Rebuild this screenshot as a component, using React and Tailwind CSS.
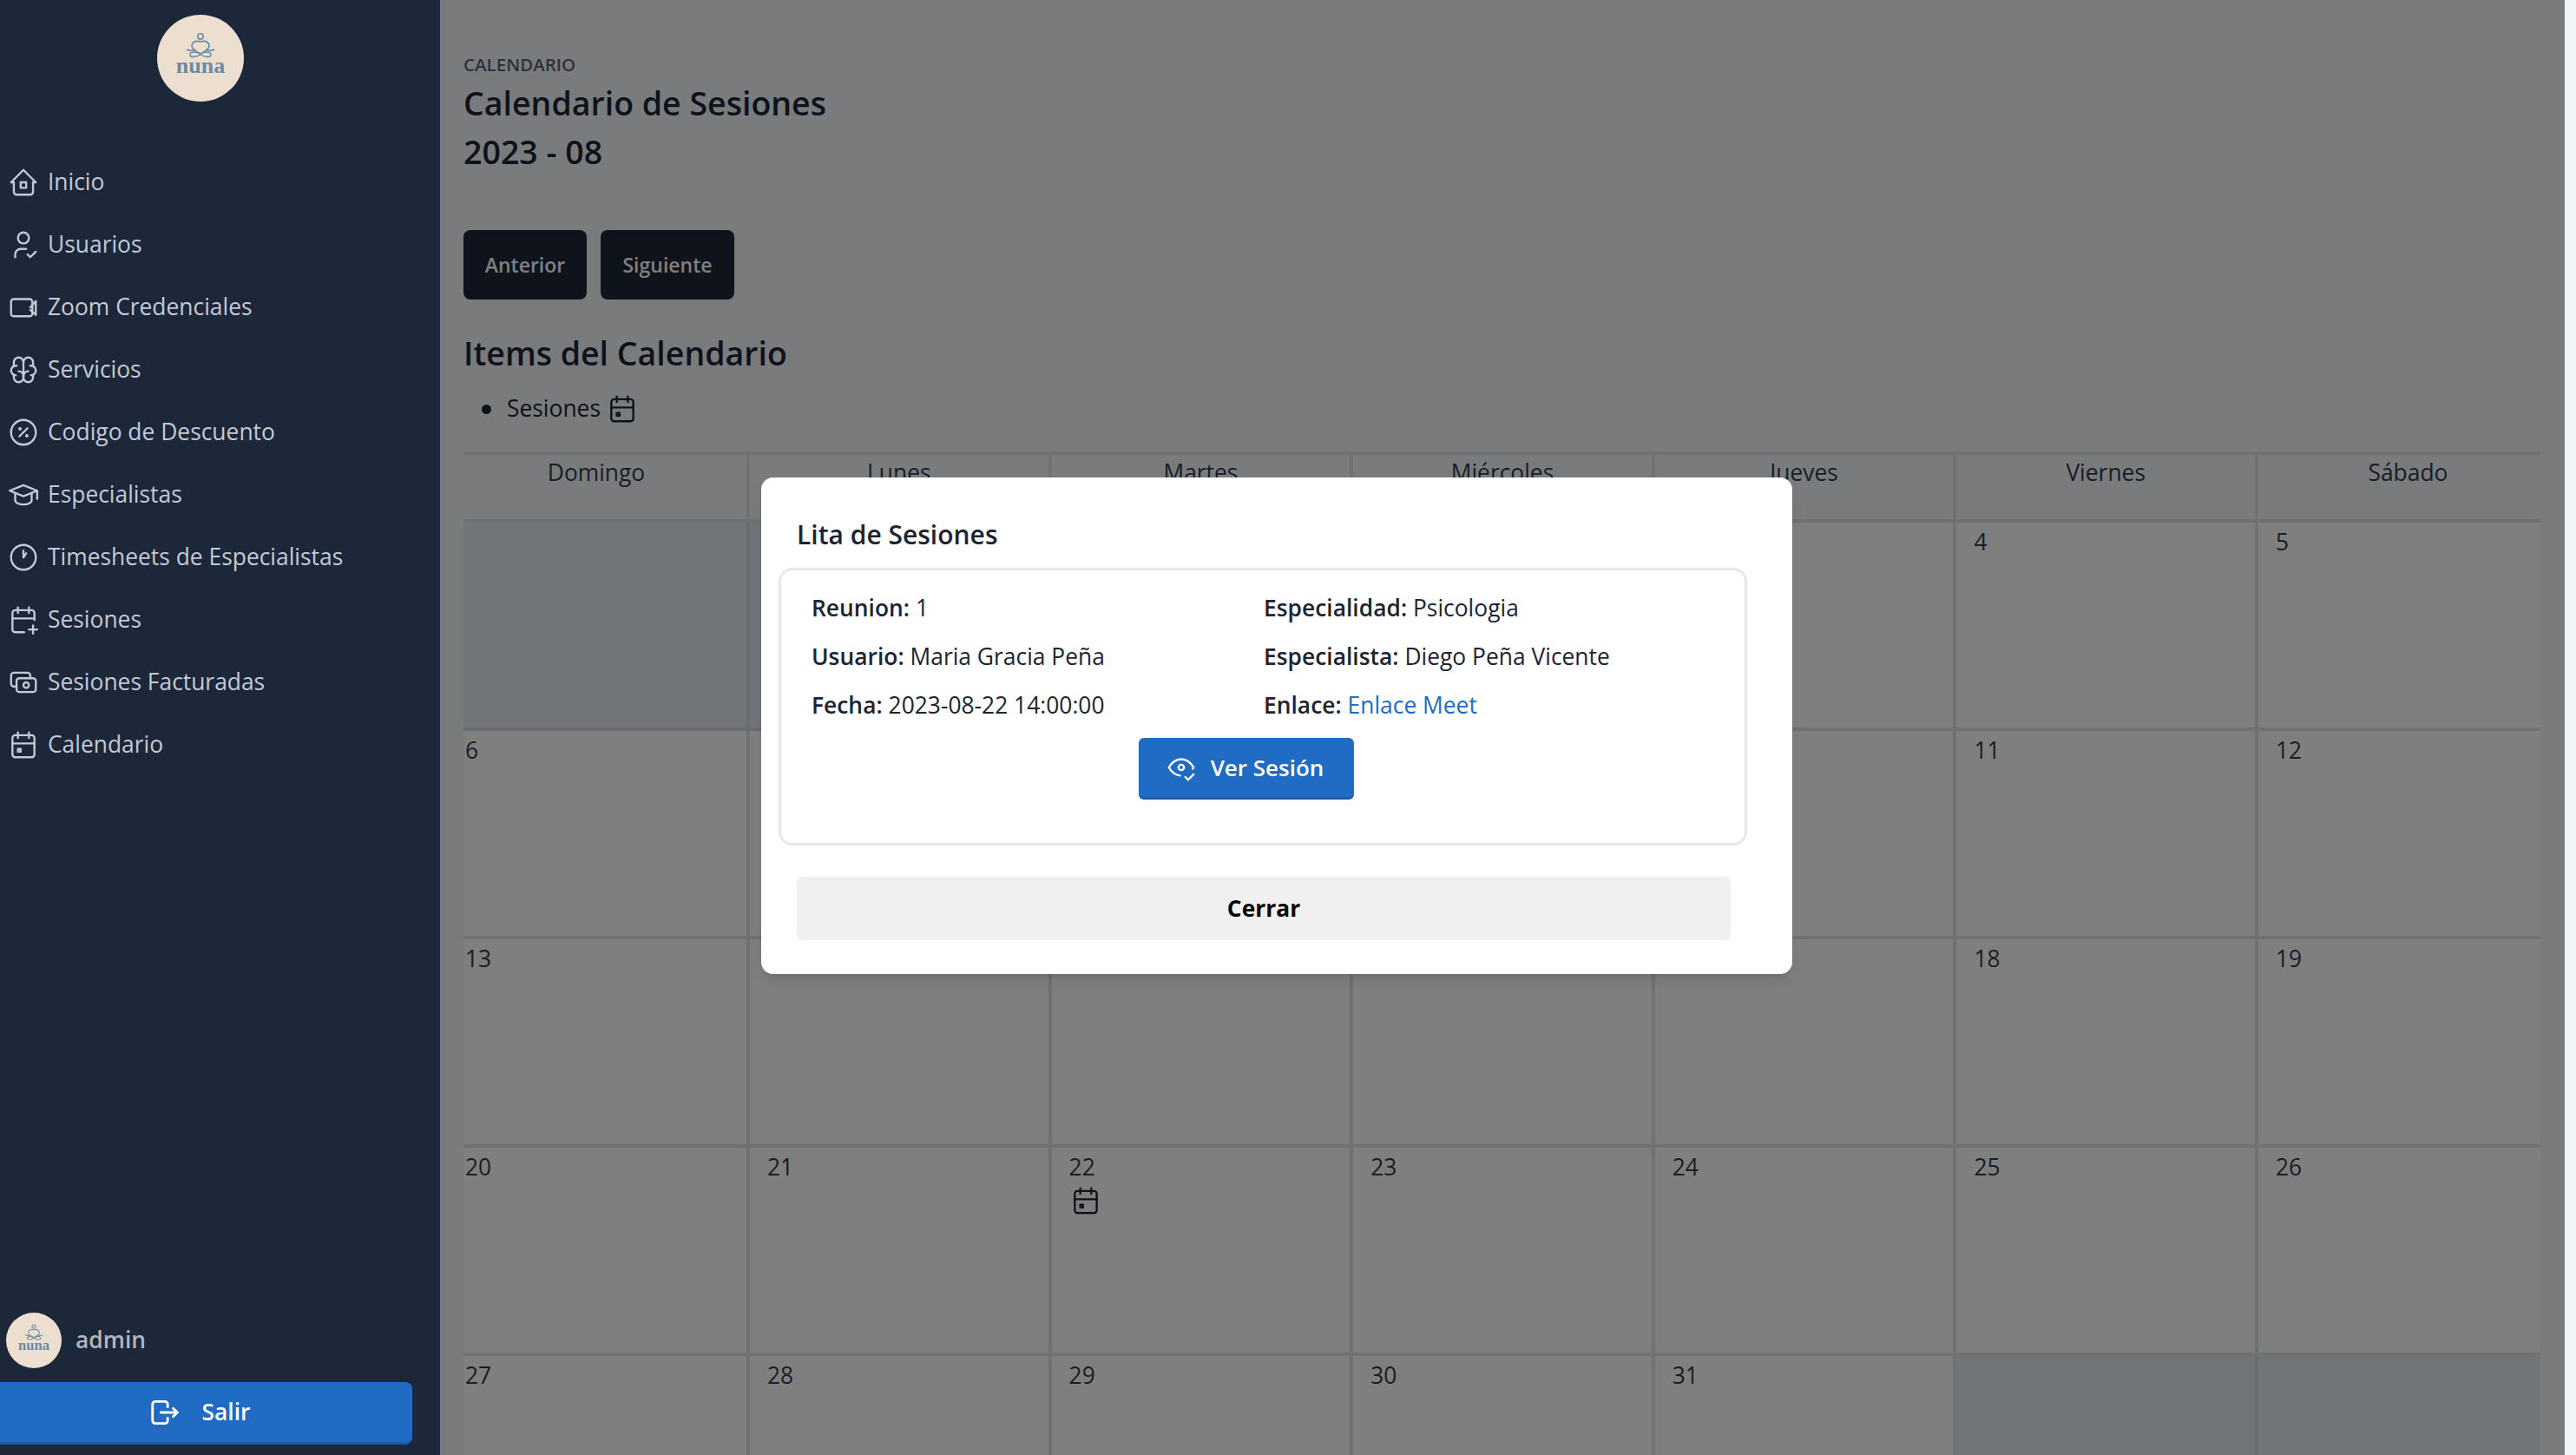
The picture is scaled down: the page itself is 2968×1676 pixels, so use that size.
import {
  TbHome2,
  TbUserCheck,
  TbBrain,
  TbDiscount,
  TbSchool,
  TbClockHour1,
  TbCalendarPlus,
  TbCash,
  TbCalendarEvent,
  TbLogout,
  TbEyeCheck,
} from "react-icons/tb";

const font = { fontFamily: '"Open Sans", "Noto Sans", sans-serif' };

function Logo({ size }) {
  return (
    <svg viewBox="0 0 100 100" className={size}>
      <circle cx="50" cy="50" r="50" fill="#ecdfd0" />
      <g fill="none" stroke="#6b8ba4" strokeWidth="1.6">
        <circle cx="50" cy="25" r="3.2" />
        <path d="M50 31C44 29 40 32 40 36C40 40 46 43 50 45C54 43 60 40 60 36C60 32 56 29 50 31Z" />
        <path d="M34 40C38 42 42 41 44 40M66 40C62 42 58 41 56 40" />
        <path d="M50 45.500C46 42 38 42 38 46C38 50 46 49 50 45.500C54 42 62 42 62 46C62 50 54 49 50 45.500Z" />
      </g>
      <text x="50" y="67" textAnchor="middle" fontSize="26" fontWeight="700" fill="#6b8ba4" fontFamily="Liberation Serif, serif">nuna</text>
    </svg>
  );
}

// camara del menu: rectangulo ancho con triangulo angosto
function VideoIcon({ className, strokeWidth }) {
  return (
    <svg viewBox="0 0 24 24" fill="none" stroke="currentColor" strokeWidth={strokeWidth} strokeLinecap="round" strokeLinejoin="round" className={className}>
      <rect x="3" y="6" width="15.500" height="12.500" rx="2" />
      <path d="M17 12L21 7.500V17.500L17 14" />
    </svg>
  );
}

const iconCls = "w-[38px] h-[38px] shrink-0";

const menu = [
  { label: "Inicio", Icon: TbHome2 },
  { label: "Usuarios", Icon: TbUserCheck },
  { label: "Zoom Credenciales", Icon: VideoIcon },
  { label: "Servicios", Icon: TbBrain },
  { label: "Codigo de Descuento", Icon: TbDiscount },
  { label: "Especialistas", Icon: TbSchool },
  { label: "Timesheets de Especialistas", Icon: TbClockHour1 },
  { label: "Sesiones", Icon: TbCalendarPlus },
  { label: "Sesiones Facturadas", Icon: TbCash },
  { label: "Calendario", Icon: TbCalendarEvent },
];

const dias = ["Domingo", "Lunes", "Martes", "Miércoles", "Jueves", "Viernes", "Sábado"];

// los numeros que quedan debajo del modal no se ven, van vacios
const cells = [
  null, null, "", "", "", "4", "5",
  "6", "", "", "", "", "11", "12",
  "13", "", "", "", "", "18", "19",
  "20", "21", "22", "23", "24", "25", "26",
  "27", "28", "29", "30", "31", null, null,
];

function Dato({ k, children }) {
  return (
    <p className="text-[26.4px] leading-[40px] text-[#1c2434] mb-[16px]">
      <span className="font-semibold">{k}:</span> {children}
    </p>
  );
}

export default function App() {
  return (
    <div className="flex h-screen overflow-hidden" style={font}>
      {/* Sidebar */}
      <aside className="w-[507px] shrink-0 bg-[#1c2739] flex flex-col text-[#c3cad6] z-10">
        <div className="pl-[181px] pt-[17px]">
          <Logo size="w-[100px] h-[100px]" />
        </div>
        <nav className="flex flex-col mt-[57px] pl-[8px]">
          {menu.map(({ label, Icon }) => (
            <div key={label} className="flex items-center gap-[9px] h-[72px] text-[26.4px]">
              <Icon className={iconCls} strokeWidth={1.5} />
              <span>{label}</span>
            </div>
          ))}
        </nav>
        <div className="mt-auto">
          <div className="flex items-center gap-[16px] pl-[7px] mb-[16px]">
            <Logo size="w-[64px] h-[64px]" />
            <span className="text-[26.4px] font-semibold text-[#aeb7c4]">admin</span>
          </div>
          <button className="w-[475px] h-[72px] mb-[12px] pr-[16px] bg-[#206bc4] border-b-[3px] border-[#1c5ca8] rounded-r-[8px] text-white text-[26.4px] font-semibold flex items-center justify-center gap-[24px]">
            <TbLogout className="w-[38px] h-[38px]" strokeWidth={1.8} />
            Salir
          </button>
        </div>
      </aside>

      {/* Contenido */}
      <main className="relative flex-1 bg-[#f4f6fa] overflow-hidden pl-[27px] pt-[62px]">
        <p className="text-[20.500px] leading-[24px] font-semibold text-[#5b6474] uppercase">Calendario</p>
        <h1 className="text-[37.500px] leading-[56px] font-semibold text-[#1c2434] mt-[5px]">Calendario de Sesiones</h1>
        <h2 className="text-[37.500px] leading-[56px] font-semibold text-[#1c2434]">2023 - 08</h2>

        <div className="flex gap-[16px] mt-[62px]">
          <button className="h-[80px] w-[142px] bg-[#1c2739] rounded-[8px] text-[23px] font-semibold text-white">Anterior</button>
          <button className="h-[80px] w-[154px] bg-[#1c2739] rounded-[8px] text-[23px] font-semibold text-white">Siguiente</button>
        </div>

        <h3 className="text-[37.500px] leading-[52px] font-semibold text-[#1c2434] mt-[36px]">Items del Calendario</h3>
        <ul className="mt-[18px] ml-[21px]">
          <li className="flex items-center text-[26.4px] text-[#1c2434] h-[40px]">
            <span className="w-[11px] h-[11px] rounded-full bg-[#1c2434] mr-[18px]" />
            Sesiones
            <TbCalendarEvent className="w-[38px] h-[38px] ml-[6px]" strokeWidth={1.5} />
          </li>
        </ul>

        <div className="grid w-fit grid-cols-[330px_repeat(5,347.600px)_325px] mt-[29px] border-t-[4px] border-[#e1e3e6]">
          {dias.map((d, i) => (
            <div
              key={d}
              className={`h-[78px] text-center text-[26.4px] leading-[40px] text-[#333c4c] border-b-[4px] border-[#e1e3e6] ${i < 6 ? "border-r-[4px]" : ""} ${i === 0 ? "pr-[20px]" : ""} ${i === 6 ? "pl-[20px]" : ""}`}
            >
              {d}
            </div>
          ))}
          {cells.map((c, i) => (
            <div
              key={i}
              className={`h-[240px] pt-[2px] text-[26.4px] leading-[40px] text-[#333c4c] border-b-[4px] ${(i + 1) % 7 ? "border-r-[4px]" : ""} ${i % 7 === 0 ? "pl-[2px]" : "pl-[20px]"} ${c === null ? "bg-[#e2e8f0] border-[#d5d9df]" : "bg-white border-[#e1e3e6]"}`}
            >
              {c}
              {c === "22" && <TbCalendarEvent className="w-[38px] h-[38px] text-[#1c2434]" strokeWidth={1.5} />}
            </div>
          ))}
        </div>

        {/* Overlay */}
        <div className="absolute inset-y-0 left-0 right-[13px] bg-black/50" />
        <div className="absolute right-0 inset-y-0 w-[13px] bg-[#f1f4f9]" />

        {/* Modal */}
        <div className="absolute left-[370px] top-[550px] w-[1188px] h-[572px] bg-white rounded-[14px] shadow-lg pt-[46px]">
          <h4 className="pl-[41px] text-[30px] leading-[40px] font-semibold text-[#1c2434]">Lita de Sesiones</h4>
          <div className="ml-[20px] mt-[18px] w-[1116px] h-[320px] border-[3px] border-[#e8e8ea] rounded-[16px] px-[35px] pt-[23px]">
            <div className="grid grid-cols-2">
              <div>
                <Dato k="Reunion">1</Dato>
                <Dato k="Usuario">Maria Gracia Peña</Dato>
                <Dato k="Fecha">2023-08-22 14:00:00</Dato>
              </div>
              <div className="pl-[1px]">
                <Dato k="Especialidad">Psicologia</Dato>
                <Dato k="Especialista">Diego Peña Vicente</Dato>
                <Dato k="Enlace"><span className="text-[#206bc4]">Enlace Meet</span></Dato>
              </div>
            </div>
            <div className="flex justify-center pr-[38px]">
              <button className="w-[248px] h-[71px] mt-[2px] pr-[5px] bg-[#206bc4] border-b-[3px] border-[#1c5ca8] rounded-[6px] text-white text-[26px] font-semibold flex items-center justify-center gap-[15px]">
                <TbEyeCheck className="w-[38px] h-[38px]" strokeWidth={1.5} />
                Ver Sesión
              </button>
            </div>
          </div>
          <button className="block ml-[41px] mt-[36px] w-[1076px] h-[73px] bg-[#f0f0f0] rounded-[6px] text-[26.4px] font-bold text-black">Cerrar</button>
        </div>
      </main>
    </div>
  );
}
